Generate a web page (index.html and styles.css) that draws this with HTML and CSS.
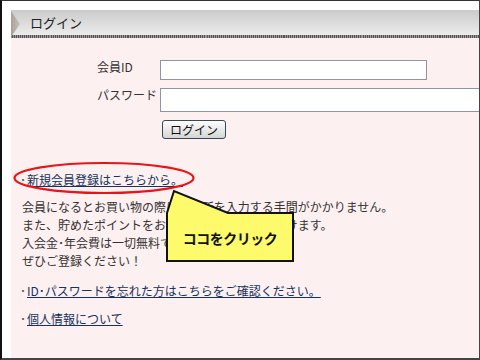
FILE: index.html
```html
<!DOCTYPE html>
<html lang="ja">
<head>
<meta charset="utf-8">
<title>ログイン</title>
<link rel="stylesheet" href="styles.css">
</head>
<body>
<div class="screen">
  <div class="panel">
    <div class="panel-head">
      <span class="arrow"></span>
      <h1 class="panel-title">ログイン</h1>
    </div>
    <div class="panel-body">
      <form class="login">
        <label class="login-label">会員ID</label>
        <input class="field field-id" type="text">
        <label class="login-label">パスワード</label>
        <input class="field field-pw" type="password">
        <span></span>
        <button class="login-btn" type="button">ログイン</button>
      </form>
      <p class="link-row signup"><span class="dot">･</span><a class="link" href="#">新規会員登録はこちらから。</a></p>
      <p class="desc">会員になるとお買い物の際に、住所を入力する手間がかかりません。<br>また、貯めたポイントをお支払いにご利用いただけます。<br>入会金･年会費は一切無料です。<br>ぜひご登録ください！</p>
      <p class="link-row forgot"><span class="dot">･</span><a class="link" href="#">ID･パスワードを忘れた方はこちらをご確認ください。</a></p>
      <p class="link-row privacy"><span class="dot">･</span><a class="link" href="#">個人情報について</a></p>
    </div>
  </div>
  <svg class="overlay" width="480" height="360" viewBox="0 0 480 360">
    <ellipse cx="104" cy="178" rx="89.5" ry="15" fill="none" stroke="#e8141a" stroke-width="2.2"/>
    <path d="M167,213 L174,191 L228,213 L293,213 L293,261 L167,261 Z" fill="#fdfb6c" stroke="#111" stroke-width="2" stroke-linejoin="miter"/>
    <text class="callout-text" x="230" y="238" text-anchor="middle" dominant-baseline="central">ココをクリック</text>
  </svg>
</div>
</body>
</html>
```
FILE: styles.css
```css
* { box-sizing: border-box; }
html, body { margin: 0; padding: 0; background: #fff; }
body {
  font-family: "Noto Sans CJK JP", "Noto Sans", sans-serif;
  color: #333;
}
.screen {
  position: relative;
  width: 480px;
  height: 360px;
  border-top: 1px solid #333;
  border-left: 2px solid #111;
  border-right: 1px solid #444;
  border-bottom: 2px solid #444;
  padding: 9px 0 0 9px;
  background: #fff;
  overflow: hidden;
  display: flex;
  flex-direction: column;
}
.panel {
  flex: 1;
  display: flex;
  flex-direction: column;
  min-height: 0;
}
.panel-head {
  position: relative;
  height: 28px;
  display: flex;
  align-items: center;
  background: linear-gradient(#cbcbcb 0%, #d6d6d6 35%, #e4e4e4 75%, #ececec 100%);
  border-bottom: 3px solid transparent;
  border-image: repeating-linear-gradient(90deg, #555 0 1px, #9a9a9a 1px 2px) 3;
}
.arrow {
  width: 9px;
  height: 26px;
  align-self: flex-start;
  margin-top: 1px;
  background: linear-gradient(90deg, #aaa196, #c9c2b8);
  clip-path: polygon(0 0, 100% 50%, 0 100%);
}
.panel-title {
  margin: 0 0 0 10px;
  font-size: 13px;
  font-weight: normal;
  color: #222;
  line-height: 1;
}
.panel-body {
  flex: 1;
  background: #fdf0f0;
  padding: 22px 0 0 9px;
}
.login {
  display: grid;
  grid-template-columns: 63px auto;
  row-gap: 8px;
  padding-left: 77px;
  justify-items: start;
}
.login-label {
  font-size: 12px;
  line-height: 14px;
  color: #333;
  align-self: start;
}
.field {
  border: 1px solid #8c95a0;
  background: #fff;
  margin: 0;
  padding: 0 2px;
  font-size: 12px;
}
.field-id { width: 267px; height: 20px; }
.field-pw { width: 330px; height: 24px; }
.login-btn {
  width: 64px;
  height: 19px;
  margin: 0 0 0 2px;
  padding: 0;
  font-family: "Noto Sans CJK JP", sans-serif;
  font-size: 12px;
  line-height: 15px;
  color: #111;
  border: 1px solid #3b4756;
  border-radius: 3px;
  background: linear-gradient(#fdfdfd, #e2e2e2 70%, #d4d4d4);
}
.link-row {
  margin: 0;
  font-size: 12px;
  line-height: 18px;
  white-space: nowrap;
}
.signup { margin-top: 32px; }
.forgot { margin-top: 12px; }
.privacy { margin-top: 10px; }
.dot { color: #555; margin-right: 1px; }
.link {
  color: #15335c;
  text-decoration: underline;
}
.desc {
  margin: 9px 0 0;
  padding-left: 2px;
  font-size: 12px;
  line-height: 18px;
  color: #333;
  white-space: nowrap;
}
.overlay {
  position: absolute;
  left: -2px;
  top: -1px;
  overflow: visible;
}
.callout-text {
  font-family: "Noto Sans CJK JP", sans-serif;
  font-size: 14px;
  font-weight: bold;
  fill: #111;
  letter-spacing: -0.5px;
}
```
